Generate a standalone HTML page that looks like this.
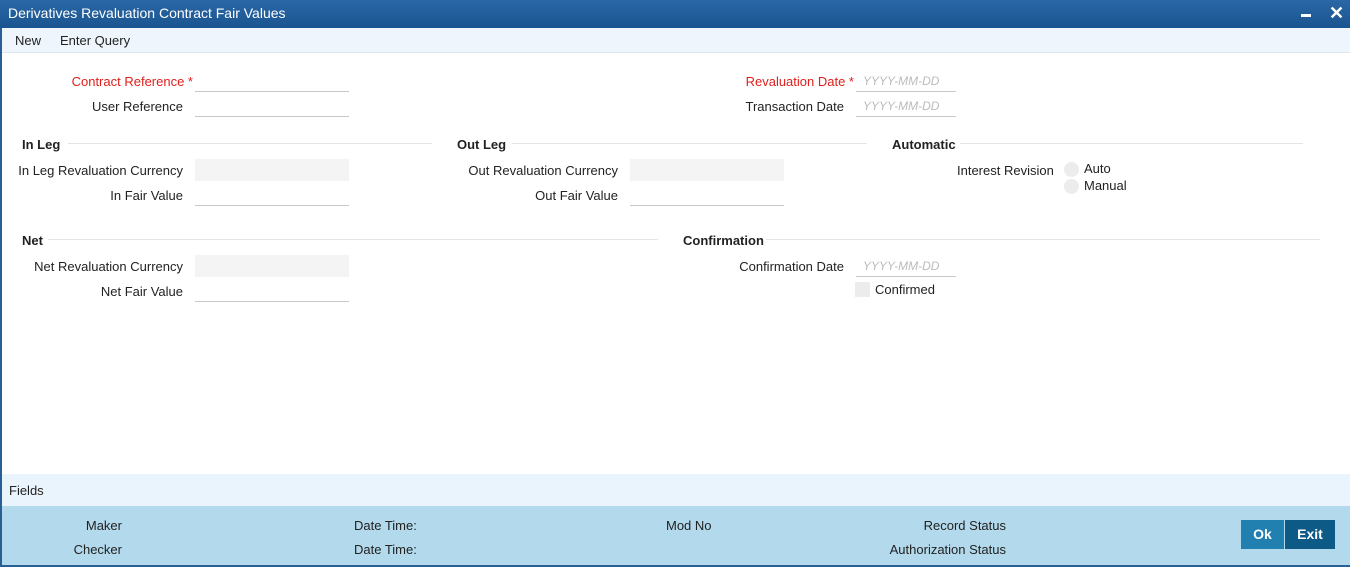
<!DOCTYPE html>
<html><head><style>
*{margin:0;padding:0;box-sizing:border-box}
body{width:1350px;height:567px;overflow:hidden;position:relative;font-family:"Liberation Sans",Arial,sans-serif;font-size:13px;color:#222;background:#fff}
.a{position:absolute;white-space:nowrap}
.r{text-align:right}
.red{color:#e0201c}
.in{position:absolute;height:22px;border-bottom:1px solid #c8c8c8}
.ro{position:absolute;height:22px;background:#f4f4f4}
.ph{color:#bbb;font-style:italic;font-size:12px}
.h{position:absolute;font-weight:bold}
.ln{position:absolute;height:1px;background:#e4e4e4}
</style></head><body>
<div class="a" style="left:0;top:0;width:1350px;height:28px;background:linear-gradient(#2a67a6,#1a5590);"></div>
<div class="a" style="left:8px;top:5px;color:#fff;font-size:14px">Derivatives Revaluation Contract Fair Values</div>
<div class="a" style="left:1301px;top:14px;width:10px;height:3px;background:#fff"></div>
<div class="a" style="left:1329px;top:3px;color:#fff;font-size:18px;font-weight:bold">✕</div>
<div class="a" style="left:0;top:28px;width:1350px;height:25px;background:#eef5fc;border-bottom:1px solid #dde6ee"></div>
<div class="a" style="left:15px;top:33px">New</div>
<div class="a" style="left:60px;top:33px">Enter Query</div>
<div class="a" style="left:0;top:28px;width:2px;height:539px;background:#2a5f96"></div>

<div class="a r red" style="left:0;width:193px;top:74px">Contract Reference *</div>
<div class="in" style="left:195px;top:70px;width:154px"></div>
<div class="a r" style="left:0;width:183px;top:99px">User Reference</div>
<div class="in" style="left:195px;top:95px;width:154px"></div>

<div class="a r red" style="left:600px;width:254px;top:74px">Revaluation Date *</div>
<div class="in" style="left:856px;top:70px;width:100px"><span class="ph" style="position:absolute;left:7px;top:4px">YYYY-MM-DD</span></div>
<div class="a r" style="left:600px;width:244px;top:99px">Transaction Date</div>
<div class="in" style="left:856px;top:95px;width:100px"><span class="ph" style="position:absolute;left:7px;top:4px">YYYY-MM-DD</span></div>

<div class="h" style="left:22px;top:137px">In Leg</div><div class="ln" style="left:68px;top:143px;width:364px"></div>
<div class="h" style="left:457px;top:137px">Out Leg</div><div class="ln" style="left:512px;top:143px;width:355px"></div>
<div class="h" style="left:892px;top:137px">Automatic</div><div class="ln" style="left:960px;top:143px;width:343px"></div>

<div class="a r" style="left:0;width:183px;top:163px">In Leg Revaluation Currency</div>
<div class="ro" style="left:195px;top:159px;width:154px"></div>
<div class="a r" style="left:0;width:183px;top:188px">In Fair Value</div>
<div class="in" style="left:195px;top:184px;width:154px"></div>
<div class="a r" style="left:400px;width:218px;top:163px">Out Revaluation Currency</div>
<div class="ro" style="left:630px;top:159px;width:154px"></div>
<div class="a r" style="left:400px;width:218px;top:188px">Out Fair Value</div>
<div class="in" style="left:630px;top:184px;width:154px"></div>

<div class="a" style="left:957px;top:163px">Interest Revision</div>
<div class="a" style="left:1064px;top:162px;width:15px;height:15px;border-radius:50%;background:#ececec"></div>
<div class="a" style="left:1084px;top:161px">Auto</div>
<div class="a" style="left:1064px;top:179px;width:15px;height:15px;border-radius:50%;background:#ececec"></div>
<div class="a" style="left:1084px;top:178px">Manual</div>

<div class="h" style="left:22px;top:233px">Net</div><div class="ln" style="left:48px;top:239px;width:610px"></div>
<div class="h" style="left:683px;top:233px">Confirmation</div><div class="ln" style="left:766px;top:239px;width:554px"></div>
<div class="a r" style="left:0;width:183px;top:259px">Net Revaluation Currency</div>
<div class="ro" style="left:195px;top:255px;width:154px"></div>
<div class="a r" style="left:0;width:183px;top:284px">Net Fair Value</div>
<div class="in" style="left:195px;top:280px;width:154px"></div>
<div class="a r" style="left:600px;width:244px;top:259px">Confirmation Date</div>
<div class="in" style="left:856px;top:255px;width:100px"><span class="ph" style="position:absolute;left:7px;top:4px">YYYY-MM-DD</span></div>
<div class="a" style="left:855px;top:282px;width:15px;height:15px;background:#ececec"></div>
<div class="a" style="left:875px;top:282px">Confirmed</div>

<div class="a" style="left:2px;top:474px;width:1348px;height:32px;background:#eaf4fc"></div>
<div class="a" style="left:9px;top:483px">Fields</div>
<div class="a" style="left:2px;top:506px;width:1348px;height:59px;background:#b3d9ec"></div>
<div class="a" style="left:0;top:565px;width:1350px;height:2px;background:#2a5f96"></div>
<div class="a r" style="left:0;width:122px;top:518px">Maker</div>
<div class="a r" style="left:0;width:122px;top:542px">Checker</div>
<div class="a" style="left:354px;top:518px">Date Time:</div>
<div class="a" style="left:354px;top:542px">Date Time:</div>
<div class="a" style="left:666px;top:518px">Mod No</div>
<div class="a r" style="left:800px;width:206px;top:518px">Record Status</div>
<div class="a r" style="left:800px;width:206px;top:542px">Authorization Status</div>
<div class="a" style="left:1241px;top:520px;width:43px;height:29px;background:#2280b0;color:#fff;font-weight:bold;font-size:14px;text-align:center;line-height:29px">Ok</div>
<div class="a" style="left:1285px;top:520px;width:50px;height:29px;background:#0d5a86;color:#fff;font-weight:bold;font-size:14px;text-align:center;line-height:29px">Exit</div>
</body></html>
